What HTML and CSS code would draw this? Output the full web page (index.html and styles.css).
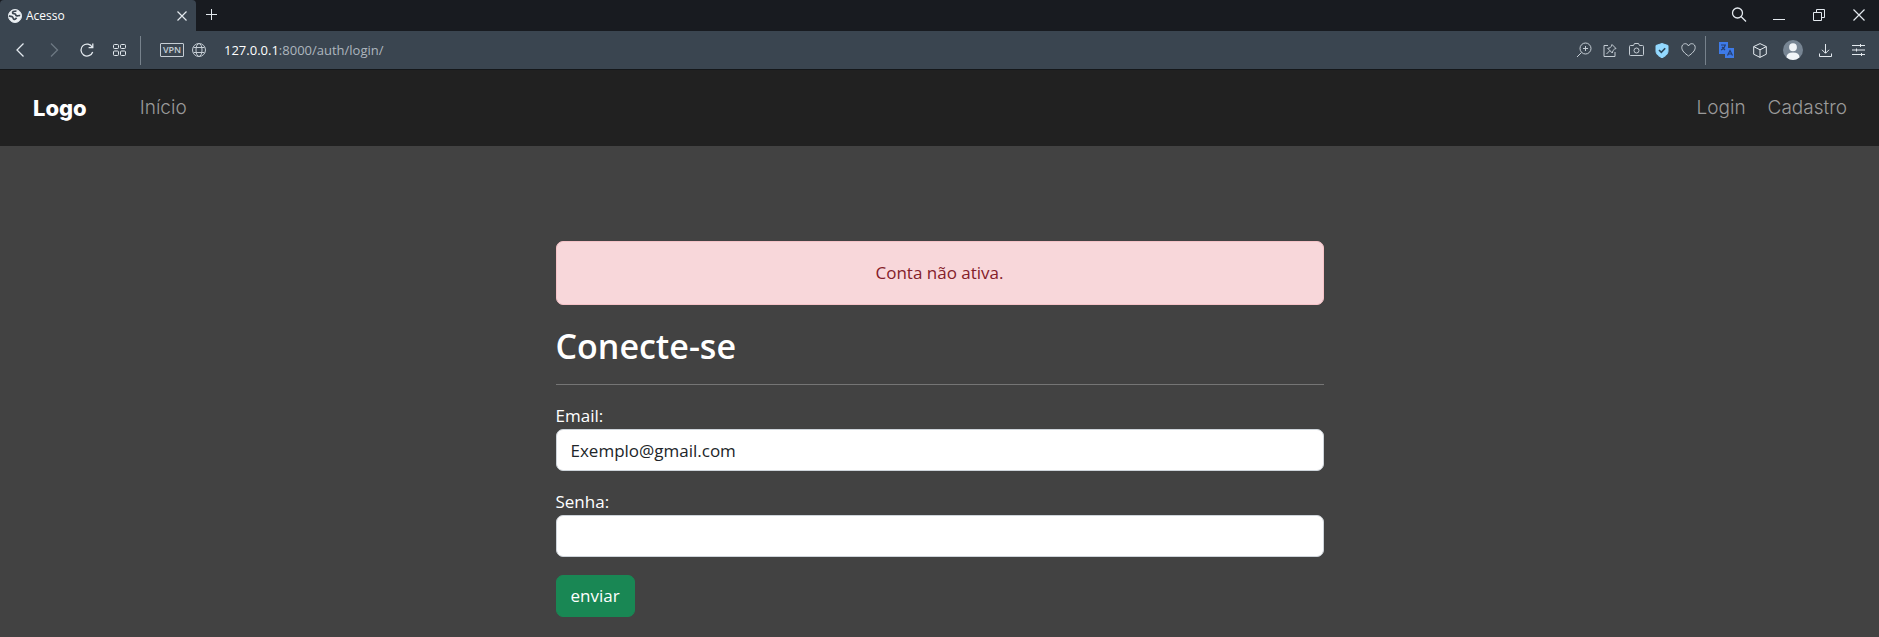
FILE: index.html
```html
<!DOCTYPE html>
<html lang="pt-BR">
<head>
<meta charset="utf-8">
<meta name="viewport" content="width=device-width, initial-scale=1">
<title>Acesso</title>
<link rel="stylesheet" href="styles.css">
</head>
<body>
<header class="browser">
  <div class="tabs">
    <div class="tab">
      <svg class="icon" width="14" height="14" viewBox="0 0 14 14"><circle cx="7" cy="7" r="6.500" fill="#eef2f5"/><path d="M8.500 2C6 2 4.200 2.800 4.600 4c.3 1 1.600.6 2.600 1 .8.400.2 1.300 1.200 1.800 1 .4 2.200-.6 3.800-.2M1 6.800c1.200.8 2.600.2 3.600 1.200.8.800.2 1.800 1.200 2.300 1.200.500 2-.4 2.800-1.600" fill="none" stroke="#3a4550" stroke-width="1.700"/></svg>
      <span class="tab-title">Acesso</span>
      <button class="tab-close" aria-label="Fechar guia"><svg class="icon" width="10" height="10" viewBox="0 0 10 10"><path d="M.5.5l9 9M9.500.5l-9 9" stroke-width="1.200"/></svg></button>
    </div>
    <button class="tab-add" aria-label="Nova guia"><svg class="icon" width="11" height="11" viewBox="0 0 11 11"><path d="M5.500 0v11M0 5.500h11"/></svg></button>
    <div class="window-controls">
      <button aria-label="Pesquisar"><svg class="icon" width="16" height="16" viewBox="0 0 16 16"><circle cx="6.500" cy="6" r="5" stroke-width="1.300"/><path d="M10 9.500l5 5" stroke-width="1.300"/></svg></button>
      <button aria-label="Minimizar"><svg class="icon" width="12" height="12" viewBox="0 0 12 12"><path d="M0 10.500h12"/></svg></button>
      <button aria-label="Restaurar"><svg class="icon" width="12" height="12" viewBox="0 0 12 12"><path d="M.5 3.500h8v8h-8zM3.500 3.500v-3h8v8h-3"/></svg></button>
      <button aria-label="Fechar"><svg class="icon" width="12" height="12" viewBox="0 0 12 12"><path d="M.5.5l11 11M11.500.5l-11 11" stroke-width="1.200"/></svg></button>
    </div>
  </div>
  <div class="toolbar">
    <div class="history">
      <button aria-label="Voltar"><svg class="icon" width="14" height="14" viewBox="0 0 14 14"><path d="M9.500.5L3 7l6.500 6.500" stroke-width="1.300"/></svg></button>
      <button class="disabled" aria-label="Avançar" disabled><svg class="icon" width="14" height="14" viewBox="0 0 14 14"><path d="M4 .5L10.500 7 4 13.500" stroke-width="1.300"/></svg></button>
      <button aria-label="Recarregar"><svg class="icon" width="14" height="14" viewBox="0 0 14 14"><path d="M12.700 9A6 6 0 1 1 12.300 4.200M12.800.5v4.200H8.600" stroke-width="1.300"/></svg></button>
      <button aria-label="Acesso rápido"><svg class="icon" width="13" height="12" viewBox="0 0 13 12"><path d="M.5 1.500q0-1 1-1h3q1 0 1 1v2q0 1-1 1h-3q-1 0-1-1zM7.500 1.500q0-1 1-1h3q1 0 1 1v2q0 1-1 1h-3q-1 0-1-1zM.5 8q0-1 1-1h3q1 0 1 1v2.500q0 1-1 1h-3q-1 0-1-1zM7.500 8q0-1 1-1h3q1 0 1 1v2.500q0 1-1 1h-3q-1 0-1-1z"/></svg></button>
    </div>
    <span class="divider"></span>
    <div class="address">
      <button class="vpn">VPN</button>
      <svg class="icon" width="14" height="14" viewBox="0 0 14 14"><circle cx="7" cy="7" r="6.500"/><ellipse cx="7" cy="7" rx="3" ry="6.500"/><path d="M1.500 4.500h11M1.500 9.500h11"/></svg>
      <span class="url"><b>127.0.0.1</b>:8000/auth/login/</span>
    </div>
    <div class="page-actions">
      <button aria-label="Zoom"><svg class="icon" width="16" height="16" viewBox="0 0 16 16"><circle cx="9.500" cy="6.500" r="5.500"/><path d="M5.500 10.500L1 15M7 6.500h5M9.500 4v5"/></svg></button>
      <button aria-label="Fixar"><svg class="icon" width="14" height="14" viewBox="0 0 14 14"><path d="M5 2.500H1v11h11V9M3.500 11l3.300-3.300M9 1.500l4 4-1.500.6-1.600 1.600-.6 2.300-4.600-4.600 2.300-.6 1.400-1.600z"/></svg></button>
      <button aria-label="Captura"><svg class="icon" width="15" height="14" viewBox="0 0 15 14"><path d="M1.500 2.500h3l1-2h4l1 2h3q1 0 1 1v8q0 1-1 1h-12q-1 0-1-1v-8q0-1 1-1z"/><circle cx="7.500" cy="7.500" r="2.500"/></svg></button>
      <button aria-label="Bloqueador"><svg class="icon" width="14" height="15" viewBox="0 0 14 15"><path d="M7 .5l6 2v5.500c0 3-2.500 5.300-6 6.700C3.500 13.300 1 11 1 8V2.500z" fill="#93d9ff" stroke="#93d9ff"/><path d="M4 7l2.300 2.300L10.200 5.200" stroke="#2b4558" stroke-width="1.600"/></svg></button>
      <button aria-label="Favoritos"><svg class="icon" width="15" height="14" viewBox="0 0 15 14"><path d="M7.500 13C4 10.500.8 7.800.8 4.500c0-4.300 5.200-5.200 6.700-1.500 1.500-3.700 6.700-2.800 6.700 1.500 0 3.300-3.200 6-6.700 8.500z"/></svg></button>
    </div>
    <span class="divider"></span>
    <div class="extensions">
      <button aria-label="Tradutor"><svg class="icon" width="17" height="16" viewBox="0 0 17 16"><path d="M1 0h9v6h6v10H7v-4H1z" fill="#3e7be8" stroke="none"/><path d="M3 3h5M7 3c0 3-2 4-4 5M4 5l3 3M9.500 13.500l2.500-5 2.500 5M10.500 12h3" stroke="#263f70" stroke-width="1.200"/></svg></button>
      <button aria-label="Extensões"><svg class="icon" width="14" height="15" viewBox="0 0 14 15"><path d="M7 .6l6.300 3v7.600L7 14.400.7 11.200V3.600zM.7 3.600L7 6.800l6.300-3.200M7 6.800v7.600"/></svg></button>
      <button aria-label="Perfil"><svg class="icon" width="20" height="20" viewBox="0 0 20 20"><circle cx="10" cy="10" r="10" fill="#778593" stroke="none"/><path d="M10 3.300a3.900 4 0 0 1 0 8 3.900 4 0 0 1 0-8zM3.500 17.500q0-5 6.500-5t6.500 5Q10 22.500 3.500 17.500z" fill="#f1f5f8" stroke="none"/></svg></button>
      <button aria-label="Downloads"><svg class="icon" width="13" height="13" viewBox="0 0 13 13"><path d="M6.500 0v9M3 5.800L6.500 9.300 10 5.800M.5 9.500v3h12v-3"/></svg></button>
      <button aria-label="Configuração fácil"><svg class="icon" width="13" height="12" viewBox="0 0 13 12"><path d="M0 1.500h13M0 6h13M0 10.500h13M8.500 0v3M4.500 4.500v3M9.500 9v3"/></svg></button>
    </div>
  </div>
</header>
<nav class="navbar">
  <a class="brand" href="#">Logo</a>
  <a class="nav-link" href="#">Início</a>
  <div class="nav-end">
    <a class="nav-link" href="#">Login</a>
    <a class="nav-link" href="#">Cadastro</a>
  </div>
</nav>
<main class="content">
  <div class="alert" role="alert">Conta não ativa.</div>
  <h1 class="title">Conecte-se</h1>
  <hr class="rule">
  <form class="form">
    <div class="field">
      <label for="email">Email:</label>
      <input id="email" type="text" value="Exemplo@gmail.com">
    </div>
    <div class="field">
      <label for="password">Senha:</label>
      <input id="password" type="password">
    </div>
    <button class="submit" type="button">enviar</button>
  </form>
</main>
</body>
</html>
```
FILE: styles.css
```css
* { box-sizing: border-box; }
body {
  margin: 0;
  min-height: 100vh;
  background: #424242;
  color: #fff;
  font-family: "Open Sans", "Noto Sans", sans-serif;
  font-size: 17px;
  line-height: 26px;
}
button, input { font: inherit; color: inherit; }
a { text-decoration: none; }

.icon { display: block; flex: none; fill: none; stroke: currentColor; }
.browser { color: #e3e9ee; }
.browser button {
  display: flex;
  align-items: center;
  justify-content: center;
  padding: 0;
  border: 0;
  background: none;
}
.tabs { display: flex; height: 31px; background: #181b20; }
.tab {
  display: flex;
  align-items: center;
  gap: 4px;
  width: 196px;
  padding: 0 9px 0 8px;
  border-radius: 4px 4px 0 0;
  background: #3a4550;
}
.tab-title { flex: 1; color: #fff; font-size: 12px; }
.tabs .tab-add { width: 30px; height: 29px; }
.window-controls { display: flex; margin-left: auto; }
.window-controls button { width: 40px; height: 30px; }

.toolbar {
  display: flex;
  align-items: center;
  height: 39px;
  padding: 0 4px;
  border-bottom: 1px solid #14171a;
  background: #3a4550;
}
.history, .page-actions, .extensions { display: flex; }
.history button, .extensions button { width: 33px; height: 38px; }
.page-actions button { width: 26px; height: 38px; color: #c5cdd4; }
.history .disabled { color: #6d7883; }
.divider { width: 1px; height: 29px; margin: 0 4px; background: #77828c; }
.address {
  display: flex;
  flex: 1;
  align-items: center;
  gap: 8px;
  padding-left: 15px;
  color: #c5cdd4;
}
.address .vpn {
  width: 24px;
  height: 14px;
  border: 1px solid #c5cdd4;
  border-radius: 1px;
  font-size: 9px;
  font-weight: 600;
  line-height: 12px;
}
.url { padding-left: 10px; color: #adb6be; font-size: 13px; }
.url b { color: #fff; font-weight: 500; }

.navbar {
  display: flex;
  align-items: center;
  height: 76px;
  padding: 0 32px 0 33px;
  background: #212121;
  font-family: Inter, sans-serif;
}
.brand { margin-right: 53px; color: #fff; font-size: 22px; font-weight: 800; }
.nav-link { color: #9a9a9a; font-size: 19px; font-weight: 300; }
.nav-end { display: flex; gap: 22px; margin-left: auto; }

.content { max-width: 768px; margin: 0 auto; padding: 95px 0 22px; }
.alert {
  padding: 18px;
  border: 1px solid #f5c2c7;
  border-radius: 7px;
  background: #f8d7da;
  color: #842029;
  text-align: center;
}
.title { margin: 20px 0 17px; font-size: 34px; font-weight: 600; line-height: 42px; }
.rule { height: 1px; margin: 0 0 18px; border: 0; background: #757575; }
.form { display: flex; flex-direction: column; align-items: flex-start; gap: 18px; }
.field { display: flex; flex-direction: column; width: 100%; }
.field input {
  height: 42px;
  padding: 0 14px;
  border: 1px solid #ced4da;
  border-radius: 7px;
  background: #fff;
  color: #212529;
}
.submit {
  height: 42px;
  padding: 0 14px;
  border: 1px solid #198754;
  border-radius: 7px;
  background: #198754;
}
```
